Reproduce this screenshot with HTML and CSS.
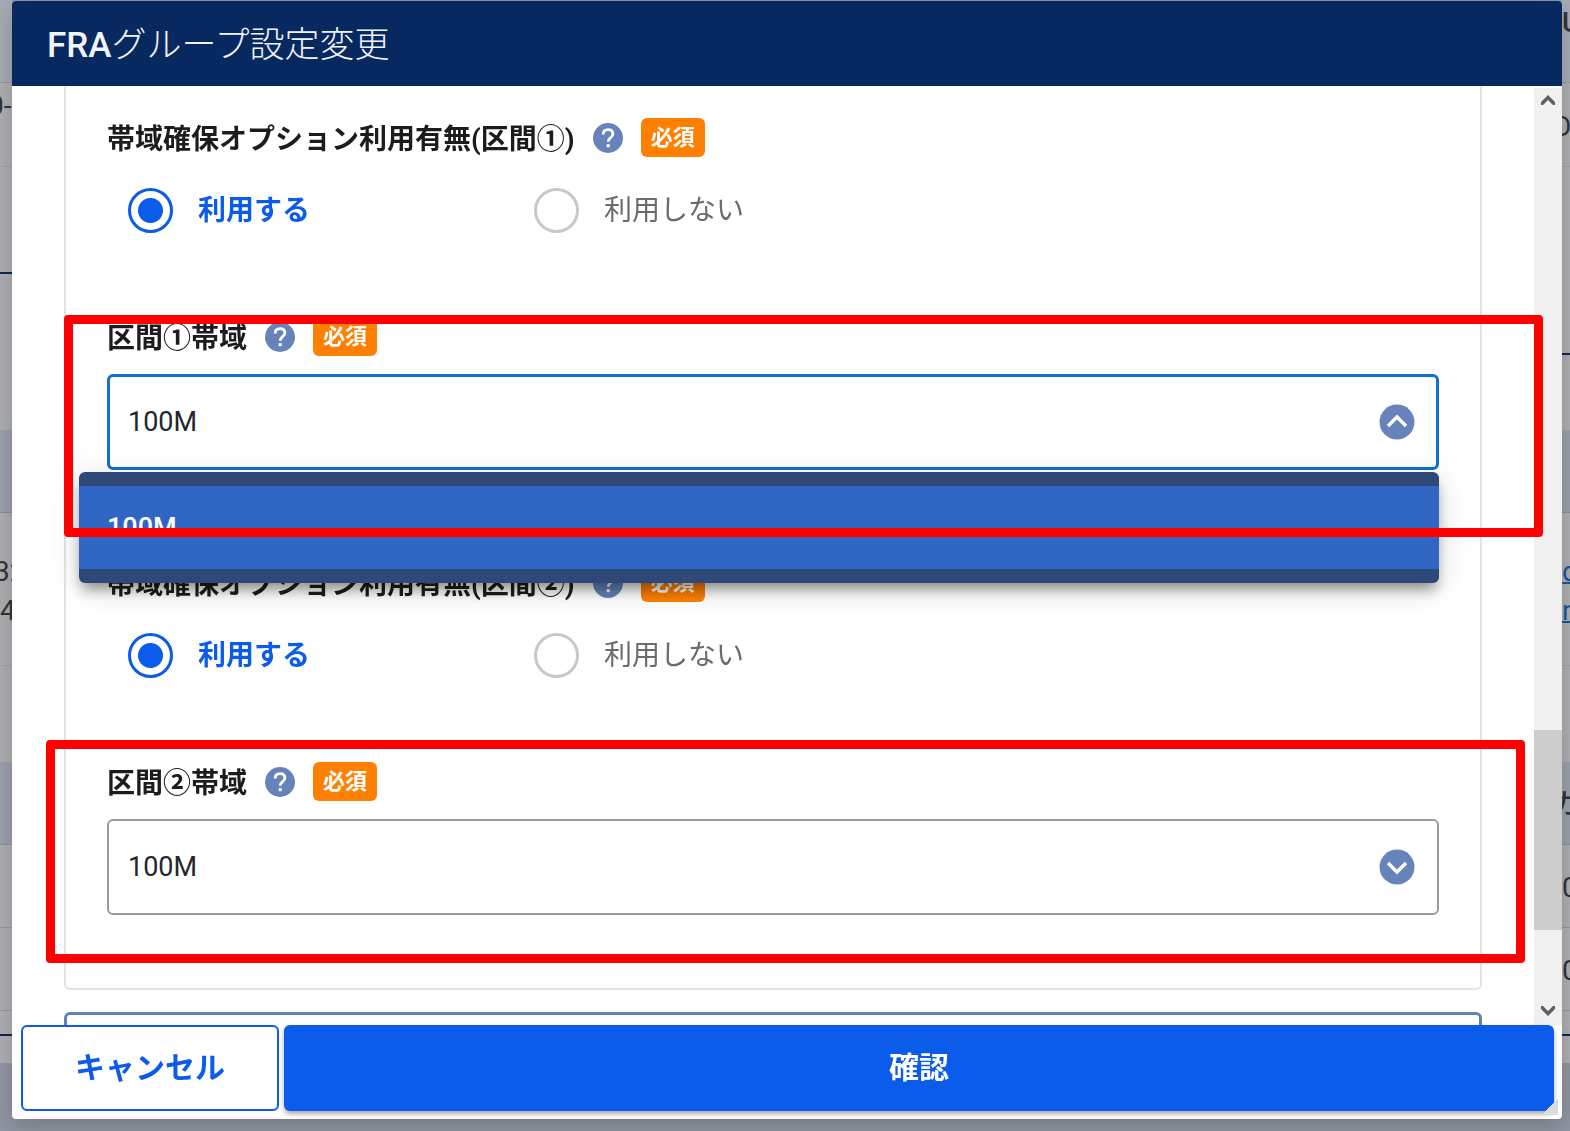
FILE: index.html
```html
<!DOCTYPE html>
<html lang="ja">
<head>
<meta charset="utf-8">
<meta name="viewport" content="width=device-width, initial-scale=1">
<title>FRAグループ設定変更</title>
<link rel="stylesheet" href="styles.css">
</head>
<body>
<div class="page" aria-hidden="true">
  <div class="page-col page-col-left">
    <div class="page-row row-top"></div>
    <div class="page-row row-cell"><span class="cut-wide">0-</span></div>
    <div class="page-row row-gap-left"></div>
    <div class="page-row row-space-left"></div>
    <div class="page-row row-head"></div>
    <div class="page-row row-data"><span class="cut-small">32</span><span>4</span></div>
    <div class="page-row row-rest"></div>
    <div class="page-row row-head"></div>
    <div class="page-row row-item"></div>
    <div class="page-row row-item"></div>
    <div class="page-row row-end"></div>
    <div class="page-row row-last"></div>
  </div>
  <div class="page-col page-col-right">
    <div class="page-row row-top"><span class="strong">U</span></div>
    <div class="page-row row-cell"><span class="cut-wide">O</span></div>
    <div class="page-row row-gap-right"></div>
    <div class="page-row row-space-right"></div>
    <div class="page-row row-head"></div>
    <div class="page-row row-data"><a href="#">d</a><a href="#">n</a></div>
    <div class="page-row row-rest"></div>
    <div class="page-row row-head"><span class="cut-wide strong">ガ</span></div>
    <div class="page-row row-item"><span>0</span></div>
    <div class="page-row row-item"><span>0</span></div>
    <div class="page-row row-end"></div>
    <div class="page-row row-last"></div>
  </div>
</div>

<div class="overlay">
  <form class="dialog" role="dialog" aria-labelledby="dialog-title">
    <header class="dialog-header">
      <h1 class="dialog-title" id="dialog-title"><span class="latin">FRA</span>グループ設定変更</h1>
    </header>

    <div class="dialog-body">
      <div class="content">
        <section class="card">
          <div class="group" role="radiogroup" aria-labelledby="opt1-label">
            <div class="caption">
              <span class="caption-text" id="opt1-label">帯域確保オプション利用有無(区間①)</span>
              <button type="button" class="help" aria-label="ヘルプ">
                <svg viewBox="0 0 30 30"><circle cx="15" cy="15" r="15"/><path d="M10.2 11.4c0-2.9 2-4.7 4.9-4.7s4.8 1.7 4.8 4.3c0 3.5-4.7 3.8-4.7 7.7"/><rect x="13.7" y="21.2" width="3" height="3"/></svg>
              </button>
              <span class="badge">必須</span>
            </div>
            <div class="options">
              <label class="option"><input type="radio" name="opt1" checked><span>利用する</span></label>
              <label class="option"><input type="radio" name="opt1"><span>利用しない</span></label>
            </div>
          </div>

          <div class="group group-select">
            <div class="caption">
              <label class="caption-text" for="band1">区間①帯域</label>
              <button type="button" class="help" aria-label="ヘルプ">
                <svg viewBox="0 0 30 30"><circle cx="15" cy="15" r="15"/><path d="M10.2 11.4c0-2.9 2-4.7 4.9-4.7s4.8 1.7 4.8 4.3c0 3.5-4.7 3.8-4.7 7.7"/><rect x="13.7" y="21.2" width="3" height="3"/></svg>
              </button>
              <span class="badge">必須</span>
            </div>
            <div class="select-wrap">
              <select id="band1" class="select is-open"><option>100M</option></select>
              <svg class="chevron" viewBox="0 0 36 36"><circle cx="18" cy="18" r="17.5"/><path d="M9 22l9-9 9 9"/></svg>
              <ul class="menu" role="listbox"><li class="menu-item" role="option" aria-selected="true">100M</li></ul>
            </div>
          </div>

          <div class="group" role="radiogroup" aria-labelledby="opt2-label">
            <div class="caption">
              <span class="caption-text" id="opt2-label">帯域確保オプション利用有無(区間②)</span>
              <button type="button" class="help" aria-label="ヘルプ">
                <svg viewBox="0 0 30 30"><circle cx="15" cy="15" r="15"/><path d="M10.2 11.4c0-2.9 2-4.7 4.9-4.7s4.8 1.7 4.8 4.3c0 3.5-4.7 3.8-4.7 7.7"/><rect x="13.7" y="21.2" width="3" height="3"/></svg>
              </button>
              <span class="badge">必須</span>
            </div>
            <div class="options">
              <label class="option"><input type="radio" name="opt2" checked><span>利用する</span></label>
              <label class="option"><input type="radio" name="opt2"><span>利用しない</span></label>
            </div>
          </div>

          <div class="group group-select">
            <div class="caption">
              <label class="caption-text" for="band2">区間②帯域</label>
              <button type="button" class="help" aria-label="ヘルプ">
                <svg viewBox="0 0 30 30"><circle cx="15" cy="15" r="15"/><path d="M10.2 11.4c0-2.9 2-4.7 4.9-4.7s4.8 1.7 4.8 4.3c0 3.5-4.7 3.8-4.7 7.7"/><rect x="13.7" y="21.2" width="3" height="3"/></svg>
              </button>
              <span class="badge">必須</span>
            </div>
            <div class="select-wrap">
              <select id="band2" class="select"><option>100M</option></select>
              <svg class="chevron" viewBox="0 0 36 36"><circle cx="18" cy="18" r="17.5"/><path d="M9 14l9 9 9-9"/></svg>
            </div>
          </div>
        </section>
        <section class="card card-next"></section>
      </div>

      <div class="scrollbar" aria-hidden="true">
        <svg class="arrow" viewBox="0 0 28 28"><path d="M7 17v-3l7-7 7 7v3h-2l-5-5-5 5z"/></svg>
        <div class="track-before"></div>
        <div class="thumb"></div>
        <div class="track-after"></div>
        <svg class="arrow" viewBox="0 0 28 28"><path d="M7 9v3l7 7 7-7V9h-2l-5 5-5-5z"/></svg>
      </div>
    </div>

    <footer class="dialog-footer">
      <button type="button" class="button button-cancel">キャンセル</button>
      <button type="submit" class="button button-confirm">確認</button>
      <span class="grip"></span>
    </footer>

    <div class="marker marker-first"></div>
    <div class="marker marker-second"></div>
  </form>
</div>
</body>
</html>
```
FILE: styles.css
```css
* { box-sizing: border-box; }

body {
  margin: 0;
  background: #9096a3;
  color: #1c1c1e;
  font-family: Roboto, "Noto Sans CJK JP", sans-serif;
  font-size: 28px;
}

/* Dimmed page behind the dialog */
.page {
  display: flex;
  justify-content: space-between;
  min-height: 100vh;
  overflow: hidden;
  color: #34343a;
}
.page-col { width: 12px; }
.page-col-right { width: 8px; }
.page-row {
  display: flex;
  flex-direction: column;
  justify-content: center;
  align-items: flex-start;
  padding-top: 3px;
  line-height: 39px;
  background: #aeafb2;
  border-bottom: 1px solid #a1a3ac;
}
.page a { color: #1559a0; }
.page-col-right a { text-decoration-thickness: 2px; }
.page-col-left .cut-wide { margin-left: -12px; white-space: nowrap; }
.page-col-left .cut-small { margin-left: -6px; }
.page-col-right .cut-wide { margin-left: -10px; }
.page .strong { font-weight: 500; }
.row-top { height: 83px; justify-content: flex-start; background: #a7abb6; border-color: #989aa0; }
.row-cell { height: 84px; }
.row-gap-left { height: 107px; border-bottom: 2px solid #12284f; }
.row-space-left { height: 156px; border: 0; }
.row-gap-right { height: 188px; border-bottom: 2px solid #12284f; }
.row-space-right { height: 75px; border: 0; }
.page-col-left .row-cell { justify-content: flex-start; }
.row-head { height: 83px; background: #9ca1af; border-color: #8c909c; }
.row-data { height: 153px; }
.row-rest { height: 96px; border: 0; }
.row-item { height: 83px; border-color: #96989e; }
.row-end { height: 25px; border-bottom: 2px solid #12284f; }
.row-last { height: 27px; border: 0; }

/* Dialog */
.overlay {
  position: fixed;
  inset: 0;
  display: flex;
  padding: 1px 8px 12px 12px;
}
.dialog {
  position: relative;
  display: flex;
  flex: 1;
  flex-direction: column;
  min-width: 0;
  border-radius: 4px;
  background: #fff;
  box-shadow: 0 8px 24px rgba(0, 0, 0, .2);
}
.dialog-header {
  flex: none;
  padding: 20px 35px 15px;
  border-radius: 4px 4px 0 0;
  background: #08295f;
  color: #f1f4fa;
}
.dialog-title {
  margin: 0;
  font-size: 35px;
  line-height: 50px;
  font-weight: 300;
}
.latin { font-weight: 500; }
.dialog-body {
  display: flex;
  flex: 1;
  min-height: 0;
  overflow: hidden;
}
.content {
  flex: 1;
  min-width: 0;
  padding: 0 52px;
}
.card {
  display: flex;
  flex-direction: column;
  gap: 84px;
  padding: 32px 41px 73px;
  border: 2px solid #e3e3e3;
  border-top: 0;
  border-radius: 0 0 6px 6px;
}
.card-next {
  margin-top: 22px;
  border: 3px solid #5f82ba;
  border-radius: 6px;
}
.group {
  display: flex;
  flex-direction: column;
  gap: 31px;
}
.group-select { gap: 18px; }
.group-select + .group { margin-top: 9px; }
.caption {
  display: flex;
  align-items: center;
  gap: 18px;
  height: 39px;
  line-height: 39px;
  font-weight: 700;
}
.caption-text { padding-top: 4px; }
.help {
  width: 30px;
  height: 30px;
  padding: 0;
  border: 0;
  background: none;
}
.help svg { display: block; }
.help circle, .chevron circle { fill: #6684bb; }
.help path { fill: none; stroke: #fff; stroke-width: 2.8; }
.help rect { fill: #fff; }
.badge {
  padding: 0 10px;
  border-radius: 6px;
  background: #ff8000;
  color: #fff;
  font-size: 22px;
}
.options { display: flex; padding-left: 21px; }
.option {
  display: flex;
  align-items: center;
  gap: 25px;
  width: 406px;
  height: 45px;
  color: #6b6b6b;
  line-height: 45px;
}
.option input {
  appearance: none;
  width: 45px;
  height: 45px;
  margin: 0;
  border: 3px solid #c8c8c8;
  border-radius: 50%;
}
.option input:checked {
  border-color: #0b5cea;
  background: radial-gradient(circle, #0b5cea 12px, transparent 13px);
}
.option input:checked + span { color: #0b5cea; font-weight: 700; }
.select-wrap { position: relative; }
.select {
  display: block;
  appearance: none;
  width: 100%;
  height: 96px;
  padding: 0 19px;
  border: 2px solid #9b9b9b;
  border-radius: 6px;
  background: #fff;
  color: #26262a;
  font: inherit;
  font-size: 27px;
}
.select.is-open { padding: 0 18px; border: 3px solid #0f6fd4; }
.chevron {
  position: absolute;
  top: 30px;
  right: 24px;
  width: 36px;
  height: 36px;
}
.chevron path { fill: none; stroke: #fff; stroke-width: 3.4; }
.menu {
  position: absolute;
  z-index: 1;
  top: 98px;
  right: 0;
  left: -28px;
  margin: 0;
  padding: 14px 0;
  border-radius: 6px;
  background: #2e4878;
  box-shadow: 0 9px 14px -3px rgba(0, 0, 0, .4), 0 6px 32px rgba(0, 0, 0, .14);
  list-style: none;
}
.menu-item {
  padding: 1px 28px 0;
  background: #2f66c3;
  color: #fff;
  font-size: 27px;
  font-weight: 500;
  line-height: 82px;
}

/* Scrollbar */
.scrollbar {
  display: flex;
  flex: none;
  flex-direction: column;
  width: 28px;
  margin-top: 2px;
  background: #f0f0f0;
}
.arrow { flex: none; width: 28px; height: 28px; fill: #606060; }
.track-before { flex: 614; }
.thumb { flex: 200; background: #cdcdcd; }
.track-after { flex: 67; }

/* Footer */
.dialog-footer {
  position: relative;
  display: flex;
  flex: none;
  gap: 5px;
  padding: 0 8px 8px 9px;
}
.button {
  height: 86px;
  padding: 0 6px 6px;
  border: 0;
  border-radius: 6px;
  font: inherit;
  font-size: 30px;
  font-weight: 700;
}
.button-cancel {
  width: 258px;
  border: 2px solid #0b5cea;
  background: #fff;
  color: #0b5cea;
}
.button-confirm {
  flex: 1;
  background: #0b5cea;
  color: #fff;
  box-shadow: 0 3px 5px rgba(0, 0, 0, .35);
}
.grip {
  position: absolute;
  right: 4px;
  bottom: 4px;
  width: 16px;
  height: 16px;
  background: linear-gradient(135deg, transparent 50%, #dcdcdc 50%);
}

/* Red frames that point out the two fields */
.marker {
  position: absolute;
  z-index: 2;
  border: 9px solid #f00;
  border-radius: 4px;
  pointer-events: none;
}
.marker-first { top: 314px; right: 19px; left: 52px; height: 222px; }
.marker-second { top: 739px; right: 37px; left: 34px; height: 223px; }
```
